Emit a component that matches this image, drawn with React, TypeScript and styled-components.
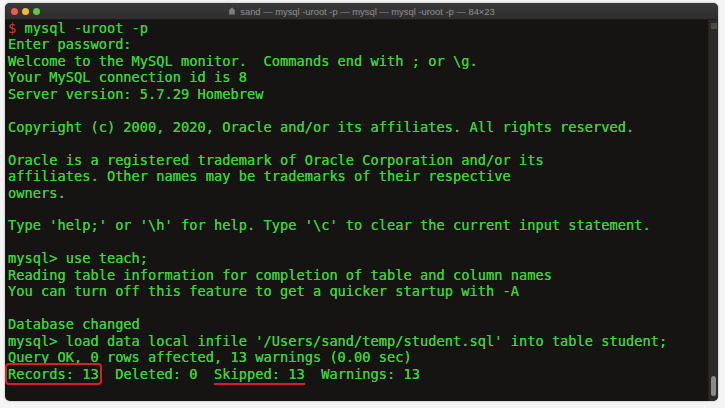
import React from "react";
import styled, { createGlobalStyle } from "styled-components";

const Global = createGlobalStyle`
  html, body { margin: 0; padding: 0; background: #f4f4f4; }
  body { width: 725px; height: 408px; overflow: hidden; }
`;

const Page = styled.div`
  width: 725px;
  height: 408px;
  box-sizing: border-box;
  padding: 3px 7px 7px 5px;
  display: flex;
`;

const Window = styled.div`
  flex: 1;
  display: flex;
  flex-direction: column;
  border-radius: 5px;
  overflow: hidden;
  background: #161313;
  box-shadow: 0 0 2px rgba(0,0,0,0.35);
`;

const TitleBar = styled.div`
  height: 16px;
  flex: none;
  display: flex;
  align-items: center;
  position: relative;
  background: linear-gradient(#3a3a3a, #2e2e2e);
  border-bottom: 1px solid #1c1c1c;
`;

const Lights = styled.div`
  display: flex;
  gap: 4px;
  padding-left: 6px;
`;

const Light = styled.span<{ $c: string }>`
  width: 7px;
  height: 7px;
  border-radius: 50%;
  background: ${(p) => p.$c};
`;

const Title = styled.div`
  position: absolute;
  left: 0;
  right: 0;
  display: flex;
  justify-content: center;
  align-items: center;
  gap: 4px;
  font-family: "Liberation Sans", Arial, sans-serif;
  font-size: 9.4px;
  color: #8f8f8f;
`;

const Body = styled.div`
  flex: 1;
  display: flex;
  min-height: 0;
`;

const Screen = styled.pre`
  flex: 1;
  margin: 0;
  padding: 0 0 0 3px;
  font-family: "DejaVu Sans Mono", monospace;
  font-size: 13.7px;
  line-height: 16.45px;
  color: #3ad434;
  white-space: pre;
  overflow: hidden;
  text-shadow: 0 0 0.6px #3ad434;
`;

const Prompt = styled.span`
  color: #d33a2c;
  text-shadow: none;
`;

const Boxed = styled.span`
  outline: 2px solid #d42222;
  outline-offset: 1px;
  border-radius: 1px;
`;

const Underlined = styled.span`
  text-decoration: underline;
  text-decoration-color: #d42222;
  text-decoration-thickness: 2px;
  text-underline-offset: 4px;
`;

const Scroll = styled.div`
  width: 10px;
  flex: none;
  background: #2b2929;
  border-left: 1px solid #222;
  display: flex;
  flex-direction: column;
  justify-content: space-between;
  padding: 3px 0 5px;
  box-sizing: border-box;
  align-items: center;
`;

const TopMark = styled.div`
  width: 6px;
  height: 6px;
  background: #4a4a4a;
`;

const Thumb = styled.div`
  width: 5px;
  height: 20px;
  border-radius: 3px;
  background: #8a8a8a;
`;

const House = () => (
  <svg width="8" height="8" viewBox="0 0 8 8">
    <path d="M4 0.5 L7.5 3.5 L6.8 3.5 L6.8 7.5 L1.2 7.5 L1.2 3.5 L0.5 3.5 Z" fill="#7d7d7d" />
  </svg>
);

const lines = `Enter password:
Welcome to the MySQL monitor.  Commands end with ; or \\g.
Your MySQL connection id is 8
Server version: 5.7.29 Homebrew

Copyright (c) 2000, 2020, Oracle and/or its affiliates. All rights reserved.

Oracle is a registered trademark of Oracle Corporation and/or its
affiliates. Other names may be trademarks of their respective
owners.

Type 'help;' or '\\h' for help. Type '\\c' to clear the current input statement.

mysql> use teach;
Reading table information for completion of table and column names
You can turn off this feature to get a quicker startup with -A

Database changed
mysql> load data local infile '/Users/sand/temp/student.sql' into table student;
Query OK, 0 rows affected, 13 warnings (0.00 sec)
`;

export default function App() {
  return (
    <>
      <Global />
      <Page>
        <Window>
          <TitleBar>
            <Lights>
              <Light $c="#ee5b51" />
              <Light $c="#f0b93a" />
              <Light $c="#5fc44a" />
            </Lights>
            <Title>
              <House />
              <span>sand — mysql -uroot -p — mysql — mysql -uroot -p — 84×23</span>
            </Title>
          </TitleBar>
          <Body>
            <Screen>
              <Prompt>$</Prompt>{" mysql -uroot -p\n"}
              {lines}
              <Boxed>Records: 13</Boxed>{"  Deleted: 0  "}
              <Underlined>Skipped: 13</Underlined>{"  Warnings: 13"}
            </Screen>
            <Scroll>
              <TopMark />
              <Thumb />
            </Scroll>
          </Body>
        </Window>
      </Page>
    </>
  );
}
